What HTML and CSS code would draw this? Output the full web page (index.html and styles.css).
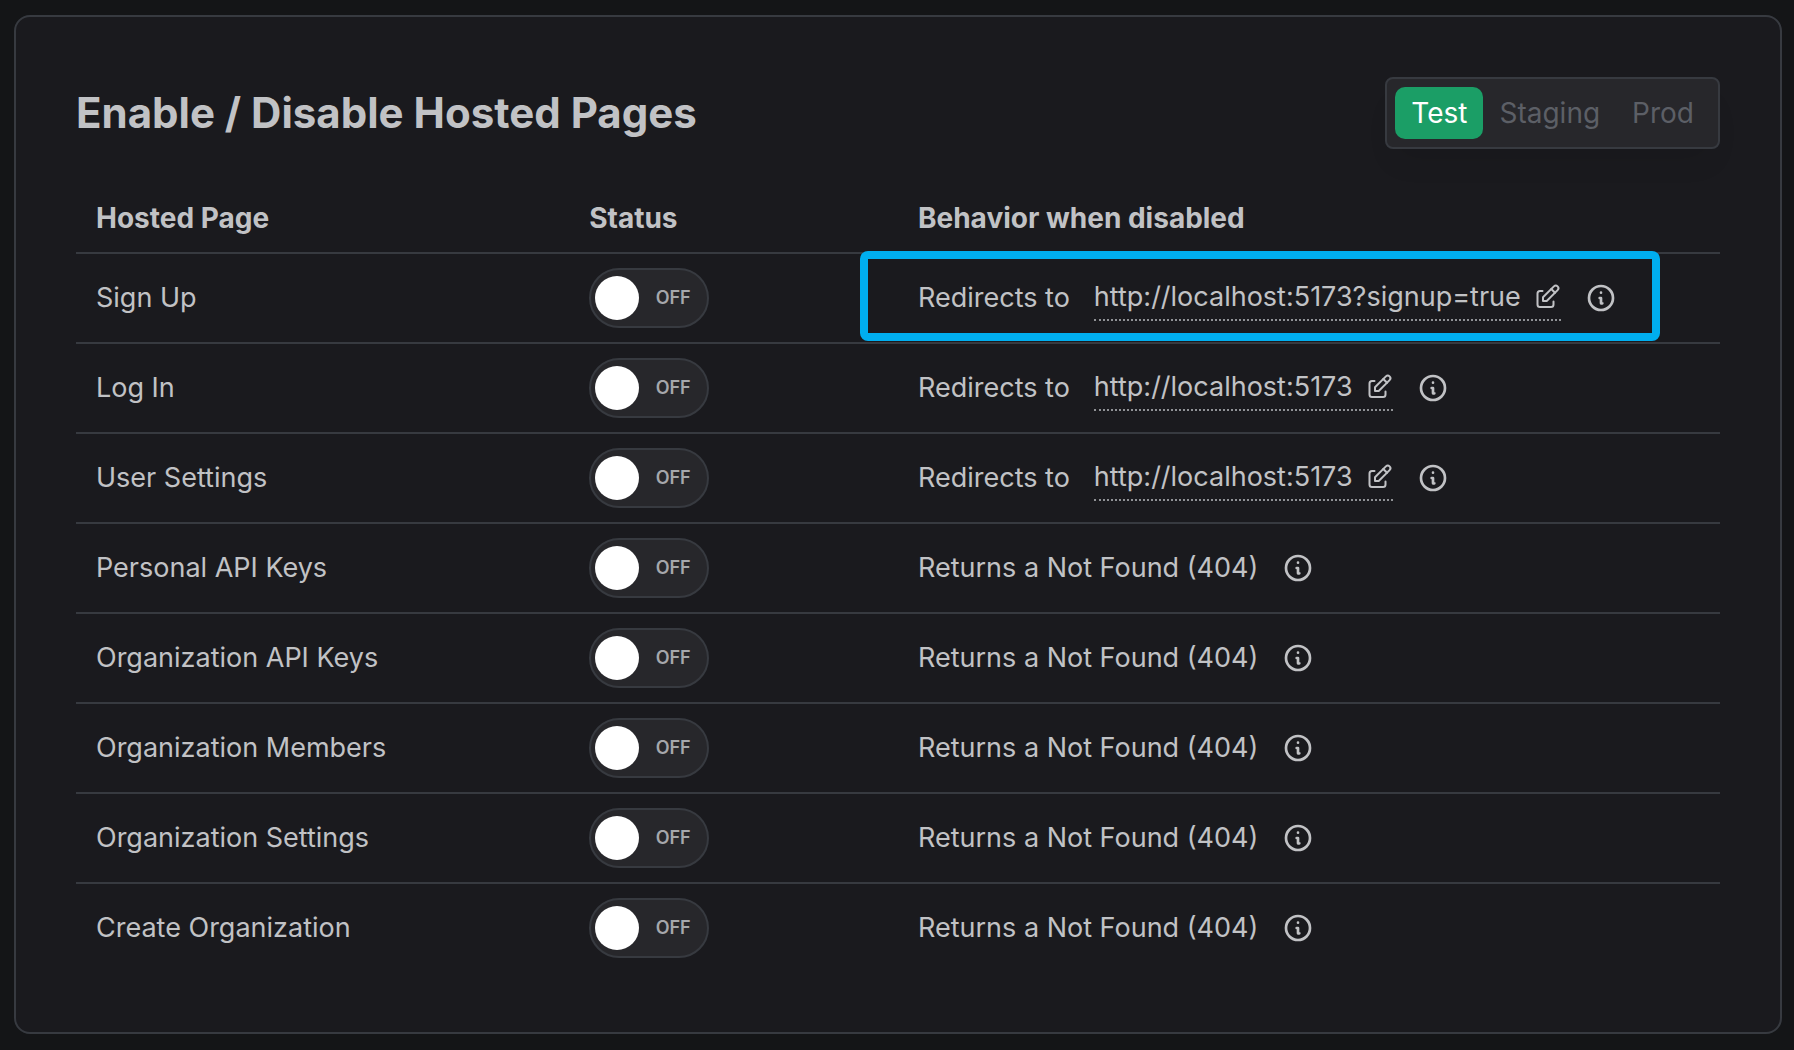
FILE: index.html
```html
<!DOCTYPE html>
<html lang="en">
<head>
<meta charset="utf-8">
<title>Hosted Pages</title>
<meta name="viewport" content="width=device-width, initial-scale=1">
<link rel="stylesheet" href="styles.css">
</head>
<body>
<svg class="sprite" aria-hidden="true">
  <symbol id="info" viewBox="0 0 24 24">
    <circle cx="12" cy="12" r="9"/>
    <path d="M12 8h.01M11 12h1v4h1"/>
  </symbol>
  <symbol id="edit" viewBox="0 0 28 28">
    <path d="M9.500 8H7a2.500 2.500 0 0 0-2.500 2.500v11A2.500 2.500 0 0 0 7 24h11a2.500 2.500 0 0 0 2.500-2.500V18.500"/>
    <path d="M10 18v-3.700L20.900 3.400a2.600 2.600 0 0 1 3.700 3.700L13.700 18z"/>
    <path d="M18.300 6l3.700 3.700"/>
  </symbol>
</svg>
<main class="card">
  <header class="card-header">
    <h1 class="title">Enable / Disable Hosted Pages</h1>
    <div class="segments" role="group" aria-label="Environment">
      <button type="button" class="segment active" aria-pressed="true">Test</button>
      <button type="button" class="segment" aria-pressed="false">Staging</button>
      <button type="button" class="segment" aria-pressed="false">Prod</button>
    </div>
  </header>
  <table class="pages">
    <thead>
      <tr><th class="col-page" scope="col">Hosted Page</th><th class="col-status" scope="col">Status</th><th scope="col">Behavior when disabled</th></tr>
    </thead>
    <tbody>
      <tr>
        <td>Sign Up</td>
        <td><label class="switch"><input type="checkbox" role="switch" aria-label="Sign Up"><span class="thumb"></span><span class="switch-text">OFF</span></label></td>
        <td class="highlighted"><div class="behavior"><span>Redirects to</span><a class="url" href="#">http://localhost:5173?signup=true<svg class="icon-edit"><use href="#edit"/></svg></a><svg class="icon-info"><use href="#info"/></svg></div></td>
      </tr>
      <tr>
        <td>Log In</td>
        <td><label class="switch"><input type="checkbox" role="switch" aria-label="Log In"><span class="thumb"></span><span class="switch-text">OFF</span></label></td>
        <td><div class="behavior"><span>Redirects to</span><a class="url" href="#">http://localhost:5173<svg class="icon-edit"><use href="#edit"/></svg></a><svg class="icon-info"><use href="#info"/></svg></div></td>
      </tr>
      <tr>
        <td>User Settings</td>
        <td><label class="switch"><input type="checkbox" role="switch" aria-label="User Settings"><span class="thumb"></span><span class="switch-text">OFF</span></label></td>
        <td><div class="behavior"><span>Redirects to</span><a class="url" href="#">http://localhost:5173<svg class="icon-edit"><use href="#edit"/></svg></a><svg class="icon-info"><use href="#info"/></svg></div></td>
      </tr>
      <tr>
        <td>Personal API Keys</td>
        <td><label class="switch"><input type="checkbox" role="switch" aria-label="Personal API Keys"><span class="thumb"></span><span class="switch-text">OFF</span></label></td>
        <td><div class="behavior"><span>Returns a Not Found (404)</span><svg class="icon-info"><use href="#info"/></svg></div></td>
      </tr>
      <tr>
        <td>Organization API Keys</td>
        <td><label class="switch"><input type="checkbox" role="switch" aria-label="Organization API Keys"><span class="thumb"></span><span class="switch-text">OFF</span></label></td>
        <td><div class="behavior"><span>Returns a Not Found (404)</span><svg class="icon-info"><use href="#info"/></svg></div></td>
      </tr>
      <tr>
        <td>Organization Members</td>
        <td><label class="switch"><input type="checkbox" role="switch" aria-label="Organization Members"><span class="thumb"></span><span class="switch-text">OFF</span></label></td>
        <td><div class="behavior"><span>Returns a Not Found (404)</span><svg class="icon-info"><use href="#info"/></svg></div></td>
      </tr>
      <tr>
        <td>Organization Settings</td>
        <td><label class="switch"><input type="checkbox" role="switch" aria-label="Organization Settings"><span class="thumb"></span><span class="switch-text">OFF</span></label></td>
        <td><div class="behavior"><span>Returns a Not Found (404)</span><svg class="icon-info"><use href="#info"/></svg></div></td>
      </tr>
      <tr>
        <td>Create Organization</td>
        <td><label class="switch"><input type="checkbox" role="switch" aria-label="Create Organization"><span class="thumb"></span><span class="switch-text">OFF</span></label></td>
        <td><div class="behavior"><span>Returns a Not Found (404)</span><svg class="icon-info"><use href="#info"/></svg></div></td>
      </tr>
    </tbody>
  </table>
</main>
</body>
</html>
```
FILE: styles.css
```css
*, *::after { box-sizing: border-box; }

body {
  margin: 0;
  padding: 15px 12px 16px 14px;
  background: #141517;
  color: #c1c2c5;
  font-family: Inter, "Liberation Sans", sans-serif;
  font-size: 28px;
  line-height: 44px;
}

.sprite { display: none; }

.card {
  padding: 60px;
  border: 2px solid #373a40;
  border-radius: 16px;
  background: #1a1a1e;
}

.card-header {
  display: flex;
  align-items: center;
  justify-content: space-between;
  margin-bottom: 34px;
}

.title {
  margin: 0;
  font-size: 42px;
  font-weight: 700;
}

.segments {
  display: flex;
  padding: 8px;
  border: 2px solid #373a40;
  border-radius: 8px;
  background: #27272b;
  box-shadow: 0 20px 30px -10px rgba(0, 0, 0, 0.08);
}

.segment {
  height: 52px;
  padding: 0 16px;
  border: 0;
  border-radius: 10px;
  background: transparent;
  color: #5c5f66;
  font: inherit;
}

.segment.active {
  background: #1b9e66;
  color: #fff;
}

.pages {
  width: 100%;
  table-layout: fixed;
  border-collapse: separate;
  border-spacing: 0;
  text-align: left;
}

.col-page { width: 30%; }
.col-status { width: 20%; }

th {
  height: 69px;
  padding: 0 20px;
  font-weight: 700;
}

td {
  height: 90px;
  padding: 14px 20px;
  border-top: 2px solid #373a40;
  font-size: 27px;
}

.switch {
  position: relative;
  display: flex;
  align-items: center;
  width: 120px;
  height: 60px;
  padding: 0 4px;
  border: 2px solid #373a40;
  border-radius: 30px;
  background: #27272b;
}

.switch input {
  position: absolute;
  inset: 0;
  margin: 0;
  opacity: 0;
}

.thumb {
  width: 44px;
  height: 44px;
  border-radius: 50%;
  background: #fff;
}

.switch-text {
  flex: 1;
  padding-left: 4px;
  color: #a6a7ab;
  font-size: 18px;
  font-weight: 600;
  text-align: center;
}

.behavior {
  display: flex;
  align-items: center;
}

.behavior svg {
  fill: none;
  stroke: currentColor;
  stroke-width: 2;
  stroke-linecap: round;
  stroke-linejoin: round;
}

.url {
  display: flex;
  align-items: center;
  margin-left: 24px;
  border-bottom: 2px dotted #909296;
  color: inherit;
  text-decoration: none;
}

.icon-edit {
  width: 28px;
  height: 28px;
  margin-left: 12px;
}

.icon-info {
  width: 32px;
  height: 32px;
  margin-left: 24px;
}

.highlighted { position: relative; }

.highlighted::after {
  content: "";
  position: absolute;
  top: -3px;
  left: -38px;
  width: 800px;
  height: 90px;
  border: 8px solid #00aeef;
  border-radius: 8px;
  pointer-events: none;
}
```
